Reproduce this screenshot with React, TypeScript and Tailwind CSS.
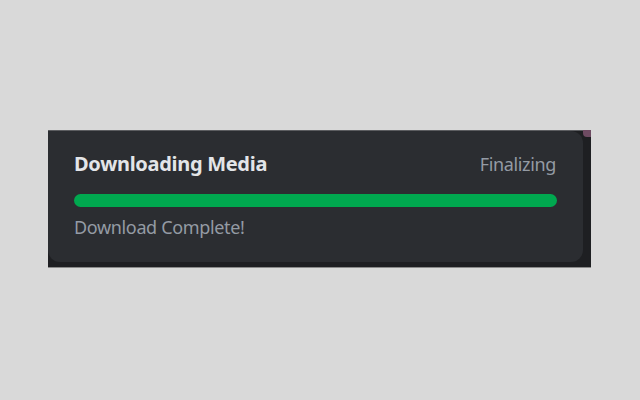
export default function App() {
  return (
    <div className="w-[640px] h-[400px] bg-[#d9d9d9] pt-[130px] pl-[48px]" style={{ fontFamily: "'Noto Sans', 'Open Sans', sans-serif" }}>
      {/* dark backdrop behind the toast */}
      <div className="relative w-[543px] h-[138px] bg-[#1e1f22] border-t border-[#5c5d60] border-b border-b-[#8a8a8a]">
        <div className="absolute right-0 top-[-1px] w-[8px] h-[7px] bg-[#6e4b62] rounded-bl-[4px]" />
        <div className="w-[535px] h-[131px] bg-[#2b2d31] rounded-b-[12px] rounded-tr-[12px] px-[26px] pt-[21px]">
          <div className="flex items-baseline justify-between">
            <h2 className="text-[20px] leading-[24px] font-bold tracking-[-0.3px] text-[#e3e5e8]">Downloading Media</h2>
            <span className="text-[18px] leading-[24px] tracking-[-0.35px] text-[#949ba4] mr-[1px]">Finalizing</span>
          </div>
          <div className="mt-[18px] h-[13px] w-full rounded-full bg-[#00a84f]" />
          <p className="mt-[8px] text-[18px] leading-[24px] tracking-[-0.35px] text-[#949ba4]">Download Complete!</p>
        </div>
      </div>
    </div>
  );
}
